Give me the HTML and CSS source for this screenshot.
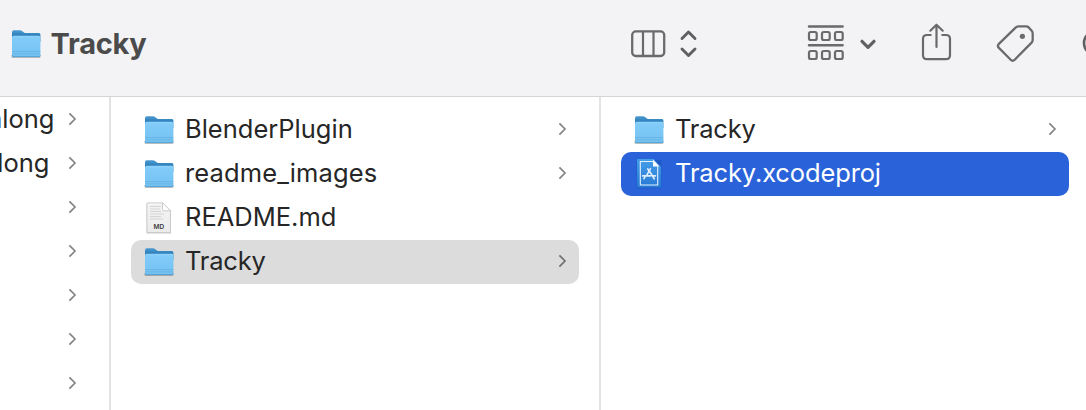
FILE: index.html
```html
<!DOCTYPE html>
<html lang="en">
<head>
<meta charset="utf-8">
<title>Tracky</title>
<link rel="stylesheet" href="styles.css">
</head>
<body>
<svg class="defs" width="0" height="0" aria-hidden="true">
  <defs>
    <linearGradient id="back" x1="0" y1="0" x2="0" y2="1"><stop offset="0" stop-color="#4b9bd1"/><stop offset=".4" stop-color="#3181bd"/></linearGradient>
    <linearGradient id="front" x1="0" y1="0" x2="0" y2="1"><stop offset="0" stop-color="#8fd3fa"/><stop offset=".12" stop-color="#80cbf8"/><stop offset="1" stop-color="#74c1f0"/></linearGradient>
    <linearGradient id="paper" x1="0" y1="0" x2="0" y2="1"><stop offset="0" stop-color="#f4f4f4"/><stop offset="1" stop-color="#ebebeb"/></linearGradient>
    <linearGradient id="blue" x1="0" y1="0" x2="0" y2="1"><stop offset="0" stop-color="#459ee8"/><stop offset="1" stop-color="#2779d5"/></linearGradient>
  </defs>
  <symbol id="folder" viewBox="-.5 0 32 32">
    <path d="M1 27h29v1.700q0 1.400-1.200 1.400H2.200Q1 30.100 1 28.700z" fill="#000" opacity=".24"/>
    <path d="M1.500 4.200q0-1.900 1.800-1.900h6.200q1.200 0 2 .7l2 1.500q.8.600 1.800.600H28.500q1.400 0 1.400 1.500V14H1.500z" fill="url(#back)"/>
    <path d="M1.500 10q0-2.200 1.700-2.200h25q1.700 0 1.700 2.200v17q0 1.900-1.500 1.900H3Q1.500 28.900 1.500 27z" fill="url(#front)"/>
    <path d="M1.500 23.500h28.400M1.500 25.800h28.400" stroke="#58a8dc" stroke-width=".5"/>
    <path d="M1.500 27.400q.2 1.200 1.500 1.200h25.400q1.300 0 1.500-1.200" fill="none" stroke="#4a9bd0" stroke-width=".8"/>
  </symbol>
  <symbol id="chevron" viewBox="0 0 10 16"><path d="M2.400 2.300l5.600 5.700-5.600 5.700" fill="none" stroke="currentColor" stroke-width="1.700"/></symbol>
</svg>
<header class="toolbar">
  <svg class="folder"><use href="#folder"/></svg>
  <h1>Tracky</h1>
  <div class="tools">
    <svg class="view" width="70" height="40" viewBox="0 0 70 40">
      <rect x="3.200" y="8.400" width="32" height="24.600" rx="3.600" fill="none" stroke="#6a6a6c" stroke-width="2.300"/>
      <path d="M14 9v23.500M24.500 9v23.500" stroke="#6a6a6c" stroke-width="2.200"/>
      <path d="M53 15.500L59.500 9l6.500 6.500M53 26l6.500 6.500L66 26" fill="none" stroke="#606062" stroke-width="2.900" stroke-linecap="round" stroke-linejoin="round"/>
    </svg>
    <svg class="group" width="72" height="40" viewBox="0 0 72 40" fill="none" stroke="#6a6a6c" stroke-width="2.200">
      <path d="M2 3.500h33.600M2 22.300h33.600" stroke-width="2.500" stroke-linecap="round"/>
      <rect x="2" y="9" width="7.700" height="8" rx="1.800"/><rect x="15" y="9" width="7.700" height="8" rx="1.800"/><rect x="28" y="9" width="7.700" height="8" rx="1.800"/>
      <rect x="2" y="28" width="7.700" height="8" rx="1.800"/><rect x="15" y="28" width="7.700" height="8" rx="1.800"/><rect x="28" y="28" width="7.700" height="8" rx="1.800"/>
      <path d="M55 18.300l6 6 6-6" stroke="#606062" stroke-width="3.200" stroke-linecap="round" stroke-linejoin="round"/>
    </svg>
    <svg class="share" width="34" height="42" viewBox="0 0 34 42" fill="none" stroke="#6a6a6c" stroke-width="2.200" stroke-linecap="round" stroke-linejoin="round">
      <path d="M10.700 13H7q-4 0-4 3.800v16.500Q3 37.200 7 37.200h19q4 0 4-3.900V16.800q0-3.800-4-3.800h-3.700"/>
      <path d="M16.500 25V3M10.300 8.700l6.200-6 6.200 6"/>
    </svg>
    <svg class="tag" width="42" height="42" viewBox="0 0 42 42" fill="none" stroke="#6a6a6c" stroke-width="2.300" stroke-linejoin="round">
      <path d="M19.600 5.600Q21 4.300 22.500 4.300H30q1.600 0 2.700 1.100l2.800 3.100q1.200 1.300 1.200 3V18q0 1.500-1.100 2.600L18.700 37.700q-2 2-4 0L2.900 25.900q-2-2 0-4z"/>
      <circle cx="26.400" cy="14.300" r="2.600" fill="#6a6a6c" stroke="none"/>
    </svg>
    <svg class="more" width="4" height="42" viewBox="0 0 4 42"><circle cx="14" cy="21" r="12" fill="none" stroke="#606062" stroke-width="2.600"/></svg>
  </div>
</header>
<main class="columns">
  <ul class="column parent">
    <li class="row"><span class="name">along</span><svg class="chevron"><use href="#chevron"/></svg></li>
    <li class="row"><span class="name second">along</span><svg class="chevron"><use href="#chevron"/></svg></li>
    <li class="row"><svg class="chevron"><use href="#chevron"/></svg></li>
    <li class="row"><svg class="chevron"><use href="#chevron"/></svg></li>
    <li class="row"><svg class="chevron"><use href="#chevron"/></svg></li>
    <li class="row"><svg class="chevron"><use href="#chevron"/></svg></li>
    <li class="row"><svg class="chevron"><use href="#chevron"/></svg></li>
  </ul>
  <ul class="column middle">
    <li class="row"><svg class="folder"><use href="#folder"/></svg><span class="name">BlenderPlugin</span><svg class="chevron"><use href="#chevron"/></svg></li>
    <li class="row"><svg class="folder"><use href="#folder"/></svg><span class="name images">readme_images</span><svg class="chevron"><use href="#chevron"/></svg></li>
    <li class="row">
      <svg class="doc" viewBox="0 0 32 32">
        <path d="M3.500 1.500h16.300l8.200 8V31.400H3.500z" fill="#000" opacity=".2"/>
        <path d="M4 .8h15.500l8 8V30.500H4z" fill="url(#paper)" stroke="#c3c3c3" stroke-width=".7"/>
        <path d="M7 4.500h11M7 7h10M7 9.500h11M7 12h14M7 14.500h11M7 17h13" stroke="#d0d0d0" stroke-width=".9"/>
        <path d="M19.500.8v6.500q0 1.500 1.500 1.500h6.500z" fill="#fff" stroke="#b7b7b7" stroke-width=".7"/>
        <text x="10.500" y="27" class="doc-type">MD</text>
      </svg>
      <span class="name readme">README.md</span></li>
    <li class="row selected"><svg class="folder"><use href="#folder"/></svg><span class="name tracky">Tracky</span><svg class="chevron"><use href="#chevron"/></svg></li>
  </ul>
  <ul class="column last">
    <li class="row"><svg class="folder"><use href="#folder"/></svg><span class="name tracky">Tracky</span><svg class="chevron"><use href="#chevron"/></svg></li>
    <li class="row active">
      <svg class="doc" viewBox="0 0 32 32">
        <path d="M3.500 2h25v28.500h-25z" fill="#164fae" opacity=".45"/>
        <path d="M4 2q0-1 1-1h15.500l7.500 8v19.500q0 1-1 1H5q-1 0-1-1z" fill="url(#blue)"/>
        <path d="M20 3.500H7.300v23.500h17.400V8.500" fill="none" stroke="#e4f1fd" stroke-width="1.100"/>
        <path d="M20 1.500v7h6.500z" fill="#fff"/>
        <path d="M14.800 10.800l1.200 2.200M17.400 10.800l-4 7M16.800 13.800l4.400 7M9.700 17.800h7.800M19.600 17.800h2.900M11.800 19.200l-.8 1.500" fill="none" stroke="#dcecfc" stroke-width="1.700" stroke-linecap="round"/>
      </svg>
      <span class="name project">Tracky.xcodeproj</span></li>
  </ul>
</main>
</body>
</html>
```
FILE: styles.css
```css
* { box-sizing: border-box; }

body {
  display: flex;
  flex-direction: column;
  height: 410px;
  margin: 0;
  overflow: hidden;
  background: #fff;
  color: #262626;
  font-family: Inter, "Liberation Sans", sans-serif;
}

.defs { position: absolute; }

.toolbar {
  display: flex;
  flex: none;
  align-items: center;
  height: 97px;
  padding: 0 0 10px 10px;
  border-bottom: 1px solid #d5d5d6;
  background: #f3f3f5;
}

.toolbar .folder { margin-top: 1px; }

h1 {
  margin: 2px 0 0 8.5px;
  color: #4b4b4c;
  font-size: 29px;
  font-weight: 700;
  line-height: 40px;
  letter-spacing: -0.25px;
}

.tools {
  display: flex;
  align-items: center;
  margin-left: auto;
}

.view { margin-right: 1px; }
.group { margin-left: 107px; }
.share { margin-left: 41px; }
.tag { margin-left: 42px; }
.more { margin-left: 44px; }

.folder, .doc {
  flex: none;
  width: 32px;
  height: 32px;
}

.columns {
  display: grid;
  flex: 1;
  grid-template-columns: 111px 490px 1fr;
  min-height: 0;
}

.column {
  margin: 0;
  padding: 11px 20px 0;
  border-right: 2px solid #e3e3e3;
  list-style: none;
}

.parent { padding: 0 32px 0 0; }
.last { padding-right: 17px; border-right: 0; }

.row {
  display: flex;
  align-items: center;
  height: 44px;
  padding: 0 12px;
  border-radius: 10px;
  font-size: 25.5px;
  white-space: nowrap;
}

.parent .row { padding: 0; }

.name {
  margin-left: 10px;
  padding-bottom: 2px;
  line-height: 32px;
}

.images { letter-spacing: 0.12px; }
.tracky { letter-spacing: -0.2px; }
.project { letter-spacing: -0.13px; }

.parent .name { margin-left: -12px; padding-bottom: 0; }
.parent .second { margin-left: -17px; }

.chevron {
  flex: none;
  width: 10px;
  height: 16px;
  margin-left: auto;
  color: #858585;
}

.middle .chevron, .last .chevron { margin-bottom: 2px; }

.selected { background: #dcdcdc; }
.selected .chevron { color: #707070; }
.active { background: #2962d9; color: #fff; }

.doc-type {
  fill: #3b3b3b;
  font-size: 6.500px;
  font-weight: 600;
}
```
